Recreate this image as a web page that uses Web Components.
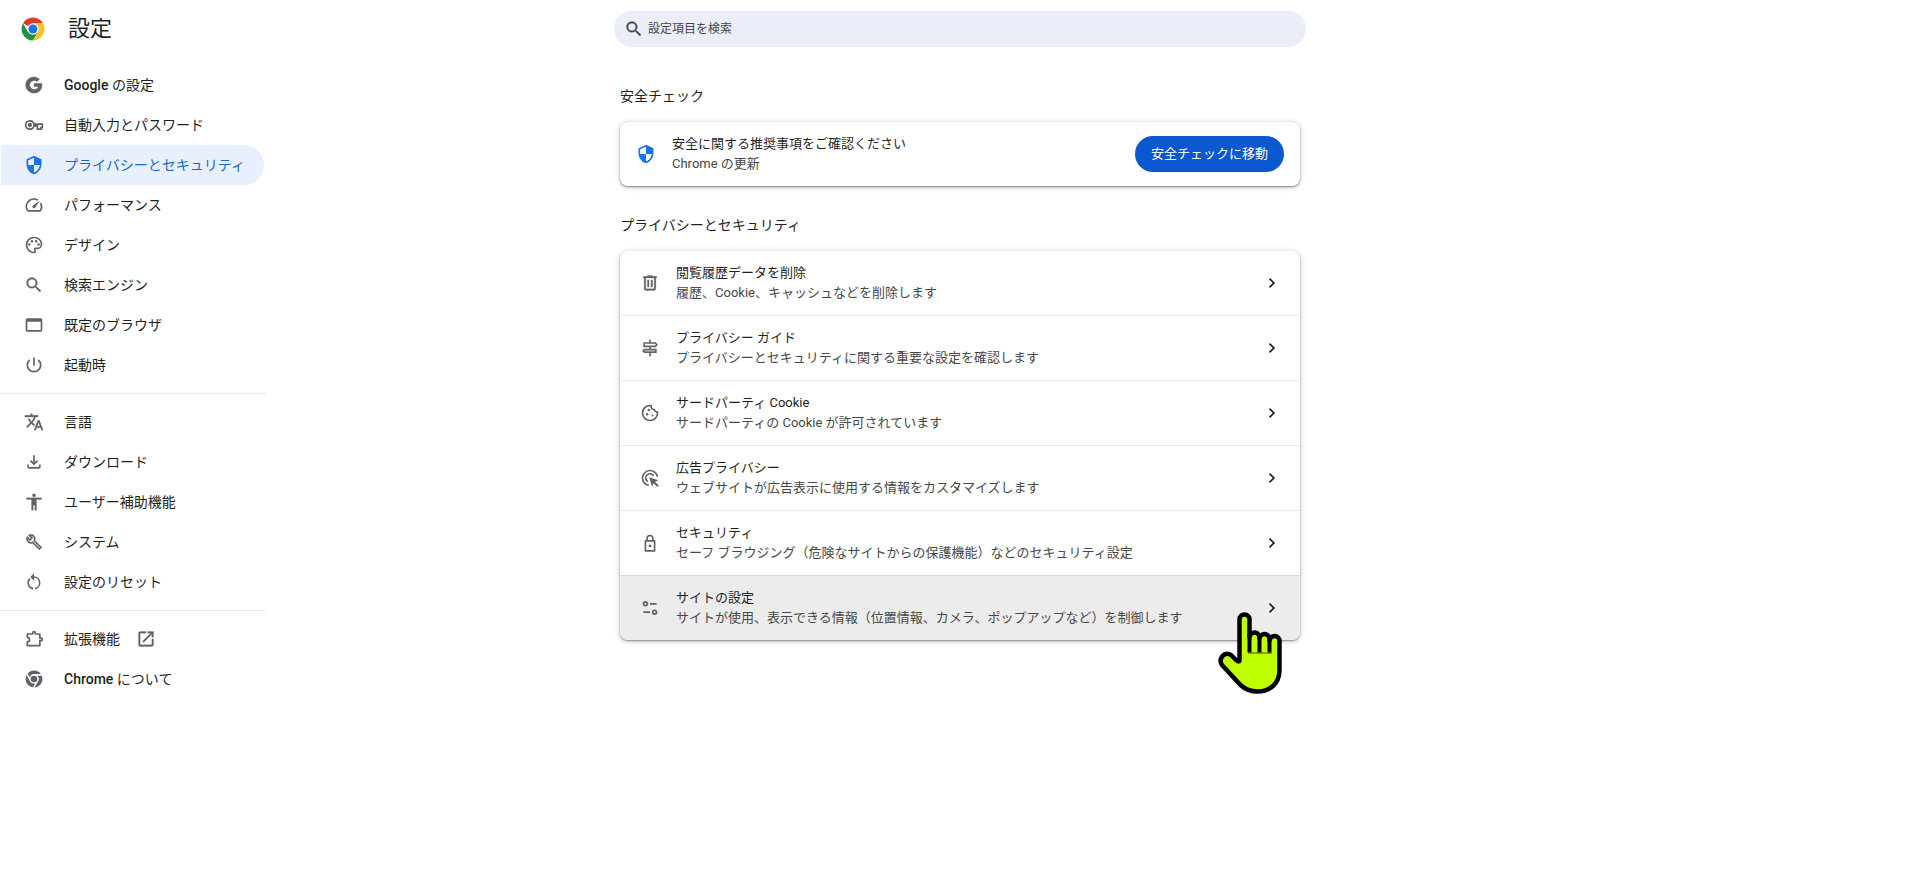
<!DOCTYPE html>
<html lang="ja">
<head>
<meta charset="utf-8">
<title>設定</title>
<style>
    body {
        margin: 0;
        background: #fff;
        color: #1f1f1f;
        font-family: Roboto, "Noto Sans CJK JP", sans-serif;
        font-size: 13px;
        line-height: 20px;
    }

    b {
        font-weight: 500;
    }
</style>
</head>
<body>
<settings-page>
    <settings-menu slot="menu">
        <settings-menu-item icon="google"><b>Google</b> の設定</settings-menu-item>
        <settings-menu-item icon="key">自動入力とパスワード</settings-menu-item>
        <settings-menu-item icon="shield" selected>プライバシーとセキュリティ</settings-menu-item>
        <settings-menu-item icon="speed">パフォーマンス</settings-menu-item>
        <settings-menu-item icon="palette">デザイン</settings-menu-item>
        <settings-menu-item icon="search">検索エンジン</settings-menu-item>
        <settings-menu-item icon="browser">既定のブラウザ</settings-menu-item>
        <settings-menu-item icon="power">起動時</settings-menu-item>
        <hr>
        <settings-menu-item icon="translate">言語</settings-menu-item>
        <settings-menu-item icon="download">ダウンロード</settings-menu-item>
        <settings-menu-item icon="accessibility">ユーザー補助機能</settings-menu-item>
        <settings-menu-item icon="wrench">システム</settings-menu-item>
        <settings-menu-item icon="reset">設定のリセット</settings-menu-item>
        <hr>
        <settings-menu-item icon="extension" external>拡張機能</settings-menu-item>
        <settings-menu-item icon="chrome"><b>Chrome</b> について</settings-menu-item>
    </settings-menu>

    <settings-section heading="安全チェック">
        <safety-check>
            安全に関する推奨事項をご確認ください
            <span slot="sub">Chrome の更新</span>
            <span slot="action">安全チェックに移動</span>
        </safety-check>
    </settings-section>
    <settings-section heading="プライバシーとセキュリティ">
        <link-row icon="trash">閲覧履歴データを削除<span slot="sub">履歴、Cookie、キャッシュなどを削除します</span></link-row>
        <link-row icon="signpost">プライバシー ガイド<span slot="sub">プライバシーとセキュリティに関する重要な設定を確認します</span></link-row>
        <link-row icon="cookie">サードパーティ Cookie<span slot="sub">サードパーティの Cookie が許可されています</span></link-row>
        <link-row icon="ads">広告プライバシー<span slot="sub">ウェブサイトが広告表示に使用する情報をカスタマイズします</span></link-row>
        <link-row icon="lock">セキュリティ<span slot="sub">セーフ ブラウジング（危険なサイトからの保護機能）などのセキュリティ設定</span></link-row>
        <link-row icon="tune" active>サイトの設定<span slot="sub">サイトが使用、表示できる情報（位置情報、カメラ、ポップアップなど）を制御します</span></link-row>
    </settings-section>
</settings-page>

<script>
'use strict';

(function () {
    // all icons are drawn on a 24x24 grid
    const icons = {
        google: '<path d="M12.2 10.2v3.6h5.1c-.5 2.3-2.3 3.6-5.1 3.6a5.4 5.4 0 1 1 3.5-9.5l2.7-2.7A9.6 9.6 0 1 0 12.2 21.6c5.5 0 9.3-3.9 9.3-9.4 0-.7-.1-1.3-.2-2z" stroke="currentColor" stroke-width=".6"/>',
        key: '<circle cx="7" cy="12" r="2.6"/><path d="M7 18a6 6 0 1 1 5.7-8H23v6h-1v2h-7v-4h-2.300A6 6 0 0 1 7 18zm0-2a4 4 0 0 0 4-4h6v4h2v-2h2v-2H11a4 4 0 1 0-4 4z" fill-rule="evenodd"/>',
        shield: '<path d="M12 1 3 5v6c0 5.550 3.840 10.740 9 12 5.160-1.260 9-6.450 9-12V5zm0 10.990h7c-.53 4.120-3.280 7.790-7 8.940V12H5V6.300l7-3.110z"/>',
        speed: '<path d="M12 4a10 10 0 0 0-8.700 15c.2.600.800 1 1.700 1h14c.800 0 1.400-.3 1.700-1A10 10 0 0 0 20.400 8.600l-1.200 1.800A8 8 0 0 1 19 18H5A8 8 0 0 1 15.600 6.900l1.800-1.300A10 10 0 0 0 12 4z"/><path d="M10.600 15.400a2 2 0 0 0 2.800 0L19 7l-8.400 5.600a2 2 0 0 0 0 2.800z"/>',
        palette: '<path d="M12 22a10 10 0 1 1 0-20c5.500 0 10 4 10 9 0 3.300-2.700 6-6 6h-1.800c-.3 0-.5.200-.5.500 0 .6.800.900.800 2.200A2.400 2.400 0 0 1 12 22zm0-18a8 8 0 1 0 0 16c.300 0 .5-.2.5-.5 0-.7-.8-.9-.8-2.300 0-1.200 1-2.200 2.500-2.200H16a4 4 0 0 0 4-4c0-3.900-3.600-7-8-7z"/><circle cx="6.500" cy="11.500" r="1.500"/><circle cx="9.500" cy="7.500" r="1.500"/><circle cx="14.500" cy="7.500" r="1.500"/><circle cx="17.500" cy="11.500" r="1.500"/>',
        search: '<path d="M15.500 14h-.79l-.28-.27A6.500 6.500 0 1 0 13.730 14.430l.27.28v.79l5 4.990L20.490 19zm-6 0a4.500 4.500 0 1 1 0-9 4.500 4.500 0 0 1 0 9z" stroke="currentColor" stroke-width=".3"/>',
        browser: '<path d="M20 4H4a2 2 0 0 0-2 2v12a2 2 0 0 0 2 2h16a2 2 0 0 0 2-2V6a2 2 0 0 0-2-2zm0 14H4V8h16z"/>',
        power: '<path d="M13 3h-2v10h2zm4.800 2.200-1.400 1.400A7 7 0 1 1 7.600 6.600L6.200 5.200a9 9 0 1 0 11.600 0z"/>',
        translate: '<path d="m12.900 15.100-2.600-2.500A17.500 17.500 0 0 0 14.100 6H17V4h-7V2H8v2H1v2h11.200A15.700 15.700 0 0 1 9 11.400 15.700 15.700 0 0 1 6.700 8h-2c.7 1.600 1.700 3.200 3 4.600L2.600 17.600 4 19l5-5 3.100 3.100zM18.500 10h-2L12 22h2l1.100-3h4.800l1.100 3h2zm-2.600 7 1.600-4.300 1.600 4.300z" stroke="currentColor" stroke-width=".3"/>',
        download: '<path d="m12 16 5-5-1.400-1.400-2.600 2.600V4h-2v8.200L8.400 9.600 7 11zM4 15v3a2 2 0 0 0 2 2h12a2 2 0 0 0 2-2v-3h-2v3H6v-3z"/>',
        accessibility: '<path d="M12 2a2 2 0 1 1 0 4 2 2 0 0 1 0-4zm9 7h-6v13h-2v-6h-2v6H9V9H3V7h18z" stroke="currentColor" stroke-width=".3"/>',
        wrench: '<path transform="translate(2 2) scale(.84)" d="m22.610 18.990-9.080-9.080c.93-2.340.45-5.100-1.440-7C9.790.61 6.210.4 3.660 2.260L7.500 6.110 6.080 7.520 2.250 3.690C.39 6.230.6 9.820 2.900 12.110c1.860 1.860 4.570 2.350 6.890 1.480l9.110 9.110c.39.39 1.020.39 1.410 0l2.300-2.300c.4-.38.4-1.010 0-1.410zm-3 1.600-9.460-9.460c-.61.45-1.290.72-2 .82-1.360.2-2.790-.21-3.830-1.250C3.370 9.760 2.930 8.500 3 7.260l3.090 3.090 4.240-4.240-3.090-3.090c1.240-.07 2.490.37 3.440 1.310 1.080 1.080 1.490 2.570 1.240 3.960-.12.71-.42 1.370-.88 1.960l9.450 9.450z" stroke="currentColor" stroke-width=".5"/>',
        reset: '<path d="M12 5V1.500L7.500 6 12 10.500V7a6 6 0 0 1 1 11.900v2A8 8 0 0 0 12 5zM6 13c0-1.700.7-3.200 1.800-4.200L6.400 7.300A8 8 0 0 0 11 20.900v-2A6 6 0 0 1 6 13z"/>',
        extension: '<path d="M10.500 4.500a1.500 1.500 0 0 1 3 0V6H19v5h1.500a1.500 1.500 0 0 1 0 3H19v6H4v-4.500c3.500-.5 3.500-5 0-5.500V6h6.500z" fill="none" stroke="currentColor" stroke-width="2" stroke-linejoin="round"/>',
        chrome: '<circle cx="12" cy="12" r="4"/><path d="M12 6h8.400A10.200 10.200 0 0 0 4.300 5.500l3 5.100A5 5 0 0 1 12 6zM3.200 7A10.200 10.200 0 0 0 10.600 22l3-5a5.500 5.500 0 0 1-6.800-2.500zM15.900 8a5.500 5.500 0 0 1 .8 7.200L12.600 22.200A10.200 10.200 0 0 0 21.300 8z"/>',
        open: '<path d="M19 19H5V5h7V3H5a2 2 0 0 0-2 2v14a2 2 0 0 0 2 2h14a2 2 0 0 0 2-2v-7h-2zM14 3v2h3.600l-9.800 9.800 1.400 1.400L19 6.400V10h2V3z" stroke="currentColor" stroke-width=".3"/>',
        trash: '<path d="M15 4V3H9v1H4v2h1v13a2 2 0 0 0 2 2h10a2 2 0 0 0 2-2V6h1V4zm2 15H7V6h10z" stroke="currentColor" stroke-width=".3"/><path d="M8.800 8H11v9H8.800zM13 8h2.200v9H13z"/>',
        signpost: '<path d="M11 22v-4H5l-2.500-2.500L5 13h6v-2H4V5h7V2h2v3h6l2.500 3L19 11h-6v2h7v5h-7v4zM6 9h12l1-1-1-1H6zm0 7h12v-1H6l-.5.5z"/>',
        cookie: '<path d="M12 3a9 9 0 1 0 9 9c0-.6 0-1-.1-1.500a3 3 0 0 1-3.700-2.700 3.500 3.500 0 0 1-3.700-4.600A9 9 0 0 0 12 3z" fill="none" stroke="currentColor" stroke-width="2" stroke-linejoin="round"/><circle cx="10.500" cy="8.500" r="1.500"/><circle cx="8.500" cy="13.500" r="1.500"/><circle cx="15" cy="15" r="1.100"/>',
        ads: '<path d="M10.500 20.900A9 9 0 1 1 20.900 10.500M9.500 16.300A5 5 0 1 1 16.300 9.500" fill="none" stroke="currentColor" stroke-width="2"/><path d="m11 11 11 3.700-4 2 4.500 4.400-1.700 1.700-4.400-4.500-2 4z"/>',
        lock: '<path d="M8.500 9V6.500a3.500 3.500 0 0 1 7 0V9M6.500 9.500h11v12h-11z" fill="none" stroke="currentColor" stroke-width="2" stroke-linejoin="round"/><circle cx="12" cy="15.500" r="1.700"/>',
        tune: '<g fill="none" stroke="currentColor" stroke-width="2"><circle cx="6.500" cy="7" r="2.300"/><circle cx="17.500" cy="17" r="2.300"/><path d="M12 7h8M4 17h8"/></g>',
        chevron: '<path d="M9.700 6 8.300 7.400l4.600 4.600-4.600 4.600L9.700 18l6-6z"/>'
    };

    class SettingsIcon extends HTMLElement {
        constructor() {
            super();
            this.attachShadow({ mode: 'open' });
        }

        connectedCallback() {
            this.shadowRoot.innerHTML = `
                <style>
                    :host {
                        display: block;
                        flex: none;
                        width: 20px;
                        height: 20px;
                    }

                    svg {
                        display: block;
                        width: 100%;
                        height: 100%;
                        fill: currentColor;
                    }
                </style>
                <svg viewBox="0 0 24 24" aria-hidden="true">${icons[this.getAttribute('name')]}</svg>
            `;
        }
    }

    class SettingsMenu extends HTMLElement {
        constructor() {
            super();
            const shadow = this.attachShadow({ mode: 'open' });

            shadow.innerHTML = `
                <style>
                    :host {
                        display: block;
                        padding-top: 8px;
                    }

                    nav {
                        display: flex;
                        flex-direction: column;
                    }

                    ::slotted(hr) {
                        width: 100%;
                        height: 1px;
                        margin: 8px 0;
                        border: 0;
                        background: #e8eaed;
                    }
                </style>
                <nav><slot></slot></nav>
            `;
        }
    }

    class SettingsMenuItem extends HTMLElement {
        constructor() {
            super();
            this.attachShadow({ mode: 'open' });
        }

        connectedCallback() {
            const external = this.hasAttribute('external');

            this.shadowRoot.innerHTML = `
                <style>
                    :host {
                        display: block;
                        margin: 0 2px 0 1px;
                    }

                    a {
                        display: flex;
                        align-items: center;
                        min-height: 40px;
                        padding: 0 16px 0 23px;
                        gap: 16px;
                        border-radius: 0 20px 20px 0;
                        color: inherit;
                        font-size: 14px;
                        text-decoration: none;
                        white-space: nowrap;
                    }

                    .label {
                        padding-left: 4px;
                    }

                    settings-icon {
                        color: #5f6368;
                    }

                    :host([selected]) a {
                        background: #e8f0fe;
                        color: #1967d2;
                    }

                    :host([selected]) settings-icon {
                        color: #1a73e8;
                    }
                </style>
                <a href="#${this.getAttribute('icon')}">
                    <settings-icon name="${this.getAttribute('icon')}"></settings-icon>
                    <span class="label"><slot></slot></span>
                    ${external ? '<settings-icon name="open"></settings-icon>' : ''}
                </a>
            `;
        }
    }

    class SettingsSearch extends HTMLElement {
        constructor() {
            super();
            const shadow = this.attachShadow({ mode: 'open' });

            shadow.innerHTML = `
                <style>
                    :host {
                        display: block;
                    }

                    label {
                        display: flex;
                        align-items: center;
                        height: 36px;
                        padding: 0 12px 0 10px;
                        gap: 4px;
                        border-radius: 18px;
                        background: #ebeef8;
                        color: #474747;
                    }

                    input {
                        flex: 1;
                        min-width: 0;
                        padding: 0;
                        border: 0;
                        outline: 0;
                        background: none;
                        color: inherit;
                        font: 12px/20px Roboto, "Noto Sans CJK JP", sans-serif;
                    }

                    input::placeholder {
                        color: inherit;
                        opacity: 1;
                    }
                </style>
                <label>
                    <settings-icon name="search"></settings-icon>
                    <input type="search" placeholder="設定項目を検索" aria-label="設定項目を検索">
                </label>
            `;
        }
    }

    class SettingsSection extends HTMLElement {
        constructor() {
            super();
            this.attachShadow({ mode: 'open' });
        }

        connectedCallback() {
            this.shadowRoot.innerHTML = `
                <style>
                    :host {
                        display: block;
                    }

                    h2 {
                        margin: 0 0 16px;
                        font-size: 14px;
                        font-weight: 400;
                        line-height: 20px;
                    }

                    .card {
                        border-radius: 8px;
                        background: #fff;
                        box-shadow: 0 1px 2px rgba(0, 0, 0, .4), 0 1px 6px rgba(0, 0, 0, .2);
                        overflow: hidden;
                    }
                </style>
                <h2>${this.getAttribute('heading')}</h2>
                <div class="card"><slot></slot></div>
            `;
        }
    }

    class SafetyCheck extends HTMLElement {
        constructor() {
            super();
            const shadow = this.attachShadow({ mode: 'open' });

            shadow.innerHTML = `
                <style>
                    :host {
                        display: flex;
                        align-items: center;
                        padding: 12px 16px;
                        gap: 16px;
                    }

                    settings-icon {
                        color: #1a73e8;
                    }

                    .text {
                        flex: 1;
                    }

                    .sub {
                        color: #474747;
                    }

                    button {
                        height: 36px;
                        padding: 0 16px;
                        border: 0;
                        border-radius: 18px;
                        background: #0b57d0;
                        color: #fff;
                        font: inherit;
                        cursor: pointer;
                    }
                </style>
                <settings-icon name="shield"></settings-icon>
                <div class="text">
                    <div><slot></slot></div>
                    <div class="sub"><slot name="sub"></slot></div>
                </div>
                <button type="button"><slot name="action"></slot></button>
            `;
        }
    }

    class LinkRow extends HTMLElement {
        constructor() {
            super();
            this.attachShadow({ mode: 'open' });
        }

        connectedCallback() {
            this.shadowRoot.innerHTML = `
                <style>
                    :host {
                        display: block;
                    }

                    :host(:not(:first-child)) {
                        border-top: 1px solid #e8eaed;
                    }

                    :host([active]) {
                        border-top-color: #dadada;
                        background: #ececec;
                    }

                    a {
                        display: flex;
                        align-items: center;
                        padding: 12px 18px 12px 20px;
                        gap: 16px;
                        color: inherit;
                        text-decoration: none;
                    }

                    settings-icon {
                        color: #5f6368;
                    }

                    settings-icon[name="chevron"] {
                        color: #1f1f1f;
                    }

                    .text {
                        flex: 1;
                    }

                    .sub {
                        color: #474747;
                    }
                </style>
                <a href="#${this.getAttribute('icon')}">
                    <settings-icon name="${this.getAttribute('icon')}"></settings-icon>
                    <div class="text">
                        <div><slot></slot></div>
                        <div class="sub"><slot name="sub"></slot></div>
                    </div>
                    <settings-icon name="chevron"></settings-icon>
                </a>
            `;
        }
    }

    // large hand pointer, lies over the page
    class HandPointer extends HTMLElement {
        constructor() {
            super();
            const shadow = this.attachShadow({ mode: 'open' });

            shadow.innerHTML = `
                <style>
                    :host {
                        position: absolute;
                        right: 18px;
                        bottom: -54px;
                        width: 64px;
                        height: 82px;
                        pointer-events: none;
                    }

                    svg {
                        display: block;
                    }
                </style>
                <svg width="64" height="82" viewBox="0 0 64 82" aria-hidden="true">
                    <path d="M21.500 48V7.500a5 5 0 0 1 10 0V25a4.500 4.500 0 0 1 10 1 4.500 4.500 0 0 1 10 2.500 4.600 4.600 0 0 1 10 1V58c0 13-9 21.500-22 21.500-7 0-12-2-17-6.500L4 53C0 47 6 39 13 43l5.500 5.500q3 2 3-.5z" fill="#bfff00" stroke="#000" stroke-width="4.500" stroke-linejoin="round"/>
                    <path d="M31.500 22v18.500M41.500 24v16.500M51.500 27v13.500" fill="none" stroke="#000" stroke-width="4"/>
                    <path d="M30 41h24" stroke="#3d5200"/>
                </svg>
            `;
        }
    }

    class SettingsPage extends HTMLElement {
        constructor() {
            super();
            const shadow = this.attachShadow({ mode: 'open' });

            shadow.innerHTML = `
                <style>
                    :host {
                        display: grid;
                        grid-template-columns: 266px minmax(0, 1fr) 266px;
                        grid-template-rows: 57px auto;
                    }

                    header {
                        display: flex;
                        align-items: center;
                        padding-left: 21px;
                        gap: 23px;
                    }

                    header svg {
                        width: 24px;
                        height: 24px;
                    }

                    h1 {
                        margin: 0;
                        font-size: 22px;
                        font-weight: 400;
                        line-height: 32px;
                    }

                    settings-search {
                        align-self: center;
                        justify-self: center;
                        width: 100%;
                        max-width: 692px;
                    }

                    .menu {
                        grid-column: 1;
                    }

                    main {
                        position: relative;
                        display: flex;
                        flex-direction: column;
                        align-self: start;
                        justify-self: center;
                        width: 100%;
                        max-width: 680px;
                        padding-top: 29px;
                        gap: 29px;
                    }
                </style>
                <header>
                    <svg viewBox="0 0 48 48" aria-hidden="true">
                        <path d="M24 24 4.100 12.500A23 23 0 0 1 43.900 12.500H24z" fill="#db3a2c"/>
                        <path d="M4.100 12.500A23 23 0 0 0 24 47l10-17.200H14z" fill="#229342"/>
                        <path d="M43.900 12.500A23 23 0 0 1 24 47l10-17.200V18l-10-5.500z" fill="#fcc31e"/>
                        <circle cx="24" cy="24" r="11.500" fill="#fff"/>
                        <circle cx="24" cy="24" r="9" fill="#1a73e8"/>
                    </svg>
                    <h1>設定</h1>
                </header>
                <settings-search></settings-search>
                <div class="menu"><slot name="menu"></slot></div>
                <main>
                    <slot></slot>
                    <hand-pointer></hand-pointer>
                </main>
            `;
        }
    }

    customElements.define('settings-icon', SettingsIcon);
    customElements.define('settings-menu', SettingsMenu);
    customElements.define('settings-menu-item', SettingsMenuItem);
    customElements.define('settings-search', SettingsSearch);
    customElements.define('settings-section', SettingsSection);
    customElements.define('safety-check', SafetyCheck);
    customElements.define('link-row', LinkRow);
    customElements.define('hand-pointer', HandPointer);
    customElements.define('settings-page', SettingsPage);
})();
</script>
</body>
</html>
